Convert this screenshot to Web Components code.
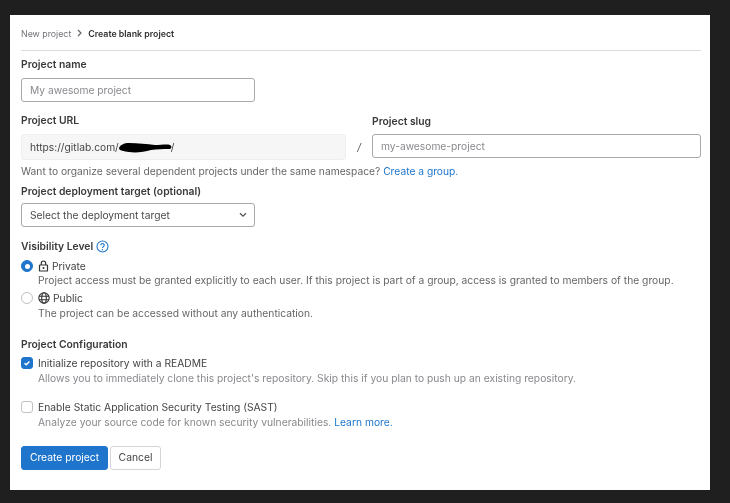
<!DOCTYPE html>
<html lang="en"><head><meta charset="utf-8"><title>Create blank project</title>
<style>
html,body{margin:0;padding:0;background:#1f1f1f}
body{width:730px;height:503px;overflow:hidden;font-family:Inter,"Noto Sans",sans-serif;font-size:10.25px;color:#303030}
</style></head><body>
<gl-page>
  <gl-breadcrumb first="New project" current="Create blank project"></gl-breadcrumb>
  <gl-label style="margin-top:7px">Project name</gl-label>
  <gl-input placeholder="My awesome project" style="width:234px;margin-top:7px"></gl-input>
  <url-row style="margin-top:12px"></url-row>
  <gl-help style="margin-top:5px;color:#666">Want to organize several dependent projects under the same namespace? <a>Create a group.</a></gl-help>
  <gl-label style="margin-top:7px">Project deployment target (optional)</gl-label>
  <gl-select style="margin-top:5px">Select the deployment target</gl-select>
  <gl-label style="margin-top:13px">Visibility Level <help-icon></help-icon></gl-label>
  <gl-option type="radio" checked icon="lock" label="Private" style="margin-top:6px;--dp:0">Project access must be granted explicitly to each user. If this project is part of a group, access is granted to members of the group.</gl-option>
  <gl-option type="radio" icon="globe" label="Public" style="margin-top:4px">The project can be accessed without any authentication.</gl-option>
  <gl-label style="margin-top:18px">Project Configuration</gl-label>
  <gl-option type="check" checked label="Initialize repository with a README" muted style="margin-top:5px">Allows you to immediately clone this project's repository. Skip this if you plan to push up an existing repository.</gl-option>
  <gl-option type="check" label="Enable Static Application Security Testing (SAST)" muted style="margin-top:15px">Analyze your source code for known security vulnerabilities. <a>Learn more.</a></gl-option>
  <gl-actions style="margin-top:17px"></gl-actions>
</gl-page>
<script>
const def=(name,css,html)=>customElements.define(name,class extends HTMLElement{
  connectedCallback(){
    if(this.shadowRoot)return;
    const r=this.attachShadow({mode:'open'});
    r.innerHTML='<style>'+css+'</style>'+(typeof html==='function'?html(this):html);
  }
});
def('gl-page',`:host{display:block;box-sizing:border-box;margin:15px 20px 13px 10px;width:700px;height:475px;background:#fff;padding:11px 9px 0 11px;filter:blur(.5px)}`,'<slot></slot>');
def('gl-breadcrumb',`:host{display:flex;align-items:center;height:14px;padding:0 0 10px;border-bottom:1px solid #dcdcde;font-size:8.8px;color:#737278}
b{font-weight:600;color:#303030}svg{margin:0 6px 0 6px}`,h=>`<span>${h.getAttribute('first')}</span><svg width="5" height="8" viewBox="0 0 5 8"><path d="M1 1l3 3-3 3" fill="none" stroke="#666" stroke-width="1.2"/></svg><b>${h.getAttribute('current')}</b>`);
def('gl-label',`:host{display:flex;align-items:center;gap:3px;font-weight:600;font-size:10.33px;line-height:13px;color:#3a3a3a}`,'<slot></slot>');
def('gl-input',`:host{display:block;box-sizing:border-box;height:24px;border:1px solid #a8a8ad;border-radius:3px;padding:0 8px;line-height:22px;color:#89888d;font-size:10.25px;background:#fff}`,h=>h.getAttribute('placeholder'));
def('url-row',`:host{display:flex;align-items:flex-start}
.l{width:325px}.s{width:26px;box-sizing:border-box;text-align:center;color:#555;font-style:italic;line-height:13px;margin-top:1px;padding-top:26px}.r{flex:1}
.lab{font-weight:600;font-size:10.33px;line-height:13px;margin-bottom:7px;color:#3a3a3a}
.r .lab{margin-top:1px;margin-bottom:6px}
.box{box-sizing:border-box;height:26px;background:#f6f6f7;border:1px solid #efeff1;border-radius:3px;padding:0 8px;line-height:24px;color:#444;position:relative}
svg{position:absolute;left:97px;top:7px}
`,`<div class="l"><div class="lab">Project URL</div><div class="box">https://gitlab.com/<span style="margin-left:52px">/</span><svg width="53" height="11" viewBox="0 0 53 11"><path d="M0 6C1 3 5 1 10 1c9 0 18 1 26 2 6 0 12-1 15 0 2 1 2 3 0 4-7 0-13 0-19 1-7 2-15 3-22 2C5 9 0 9 0 6z" fill="#000"/></svg></div></div><div class="s">/</div><div class="r"><div class="lab">Project slug</div><gl-input placeholder="my-awesome-project"></gl-input></div>`);
def('gl-help',`:host{display:block;line-height:13px}::slotted(a){color:#1f75cb}`,'<slot></slot>');
def('gl-select',`:host{display:flex;align-items:center;justify-content:space-between;box-sizing:border-box;width:234px;height:24px;border:1px solid #a8a8ad;border-radius:3px;padding:0 7px 0 8px;color:#4a4a4f;font-size:10.25px}`,`<slot></slot><svg width="8" height="6" viewBox="0 0 8 6"><path d="M1 1.2l3 3 3-3" fill="none" stroke="#555" stroke-width="1.3"/></svg>`);
def('help-icon',`:host{display:inline-flex}`,`<svg width="13" height="13" viewBox="0 0 13 13"><circle cx="6.5" cy="6.5" r="5.5" fill="none" stroke="#1f75cb" stroke-width="1.1"/><path d="M4.8 5.2a1.7 1.7 0 1 1 2.6 1.4c-.6.4-.9.7-.9 1.3" fill="none" stroke="#1f75cb" stroke-width="1.1"/><circle cx="6.5" cy="9.7" r=".7" fill="#1f75cb"/></svg>`);
const icons={lock:`<svg width="11" height="12" viewBox="0 0 11 12"><rect x="1.5" y="5" width="8" height="6" rx=".6" fill="none" stroke="#333" stroke-width="1.2"/><path d="M3.3 5V3.2a2.2 2.2 0 0 1 4.4 0V5" fill="none" stroke="#333" stroke-width="1.2"/><circle cx="5.5" cy="8" r="1" fill="#333"/></svg>`,
globe:`<svg width="12" height="12" viewBox="0 0 12 12" fill="none" stroke="#333" stroke-width="1.1"><circle cx="6" cy="6" r="5.2"/><ellipse cx="6" cy="6" rx="2.3" ry="5.2"/><path d="M1 4.2h10M1 7.8h10"/></svg>`};
def('gl-option',`:host{display:grid;grid-template-columns:17px 1fr;font-size:10.29px;line-height:14px}
.t{color:#444;display:flex;align-items:center;gap:3px}.d{grid-column:2;color:#666;padding-top:calc(var(--dp,1) * 1px)}
:host([muted]) .d{color:#89888d}
.c{box-sizing:border-box;width:12px;height:12px;margin-top:1px;border:1px solid #c2c2c6;background:#fff;display:flex;align-items:center;justify-content:center}
.radio{border-radius:50%}.check{border-radius:3px}
.on{background:#1f75cb;border-color:#1f75cb}.dot{width:5px;height:5px;background:#fff;border-radius:50%}
.i{display:inline-flex}::slotted(a){color:#1f75cb}`,h=>{
 const ty=h.getAttribute('type'),on=h.hasAttribute('checked'),ic=h.getAttribute('icon');
 const mark=on?(ty==='radio'?'<i class="dot"></i>':'<svg width="8" height="8" viewBox="0 0 8 8"><path d="M1.5 4.2l1.7 1.6 3.3-3.4" fill="none" stroke="#fff" stroke-width="1.4"/></svg>'):'';
 return `<span class="c ${ty} ${on?'on':''}">${mark}</span><div class="t">${ic?`<span class="i">${icons[ic]}</span>`:''}<span>${h.getAttribute('label')}</span></div><div class="d"><slot></slot></div>`;
});
def('gl-actions',`:host{display:flex;gap:2px}
.b{box-sizing:border-box;height:24px;border-radius:3px;line-height:21px;text-align:center;font-size:10.3px}
.p{width:87px;background:#1f75cb;border:1px solid #1f75cb;color:#fff}.s{width:51px;background:#fff;border:1px solid #d5d5d8;color:#444}`,`<div class="b p">Create project</div><div class="b s">Cancel</div>`);
</script>
</body></html>
